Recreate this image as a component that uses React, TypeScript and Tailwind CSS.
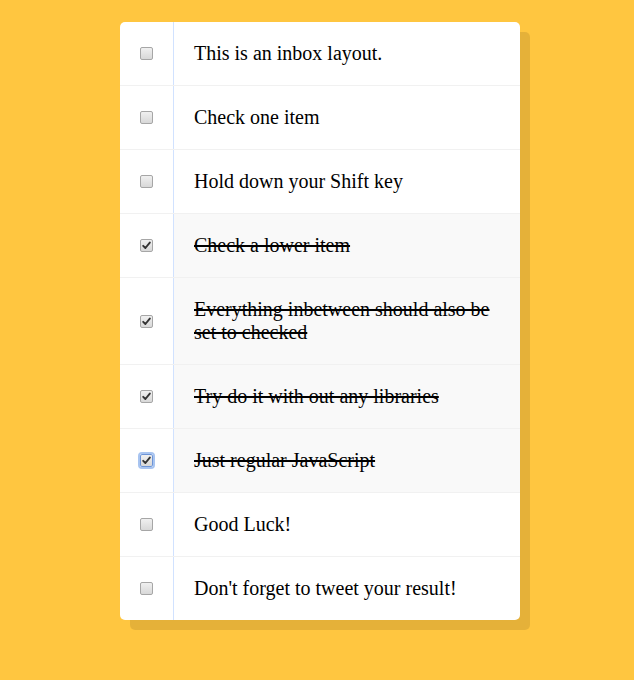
const items = [
  { text: "This is an inbox layout.", checked: false },
  { text: "Check one item", checked: false },
  { text: "Hold down your Shift key", checked: false },
  { text: "Check a lower item", checked: true },
  { text: "Everything inbetween should also be set to checked", checked: true },
  { text: "Try do it with out any libraries", checked: true },
  { text: "Just regular JavaScript", checked: true, focused: true },
  { text: "Good Luck!", checked: false },
  { text: "Don't forget to tweet your result!", checked: false },
];

function Box({ checked, focused }: { checked: boolean; focused?: boolean }) {
  return (
    <span
      className={
        "m-5 flex h-[13px] w-[13px] shrink-0 items-center justify-center rounded-[2px] border bg-gradient-to-b from-[#f0f0f0] to-[#d8d8d8] " +
        (focused ? "border-[#6d94d6] outline outline-2 outline-[#a8c4f0]" : "border-[#a6a6a6]")
      }
    >
      {checked && (
        <svg width="9" height="9" viewBox="0 0 9 9">
          <path d="M1.2 4.8 L3.4 7 L7.8 1.6" fill="none" stroke="#333" strokeWidth="1.9" strokeLinecap="round" strokeLinejoin="round" />
        </svg>
      )}
    </span>
  );
}

export default function App() {
  return (
    <div className="min-h-[680px] bg-[#ffc640] pl-[6px] pt-[22px]" style={{ fontFamily: '"Liberation Serif", serif' }}>
      <div className="mx-auto w-[400px] overflow-hidden rounded-[5px] bg-white shadow-[10px_10px_0_rgba(0,0,0,0.1)]">
        {items.map((it, i) => (
          <div
            key={i}
            className={"flex items-center " + (i < items.length - 1 ? "border-b border-[#f1f1f1]" : "")}
          >
            <Box checked={it.checked} focused={it.focused} />
            <p
              className={
                "m-0 flex-1 self-stretch border-l border-[#d1e2ff] p-5 text-[20px] leading-[23px] text-black " +
                (it.checked ? "bg-[#f9f9f9] line-through" : "")
              }
            >
              {it.text}
            </p>
          </div>
        ))}
      </div>
    </div>
  );
}
